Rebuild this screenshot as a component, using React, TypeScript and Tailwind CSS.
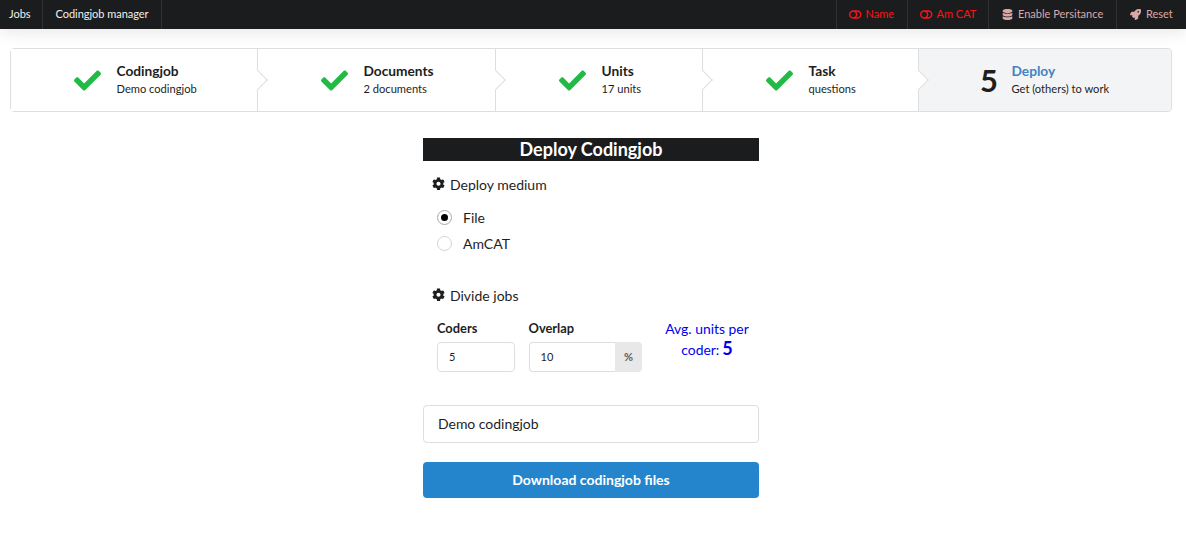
import { ReactNode } from "react";
import { FaCheck, FaCog, FaDatabase, FaRocket, FaToggleOff } from "react-icons/fa";

function MenuButton({ icon, label, className }: { icon: ReactNode; label: string; className: string }) {
  return (
    <button className={`flex items-center border-l border-[#313233] ${className}`}>
      {icon}
      <span className="pb-[2px]">{label}</span>
    </button>
  );
}

type StepProps = { title: string; text: string; className: string; active?: boolean; last?: boolean };

function Step({ title, text, className, active, last }: StepProps) {
  return (
    <div
      className={`relative flex items-center ${active ? "bg-[#f3f4f5]" : "bg-white"} ${
        last ? "rounded-r-[3px]" : "border-r border-[#dedede]"
      } ${className}`}
    >
      {active ? (
        <span className="mr-[15.5px] w-4 pt-[2px] text-[30.9px] leading-none font-bold">5</span>
      ) : (
        <FaCheck className="mr-[15.5px] h-[27px] w-[27px] shrink-0 text-[#21ba45]" />
      )}
      <div className="pb-[3px]">
        <div className={`text-[13.71px] leading-[18px] font-bold ${active ? "text-[#4183c4]" : ""}`}>{title}</div>
        <div className="mt-px text-[11.14px] leading-[15px]">{text}</div>
      </div>
      {!last && (
        <span className="absolute top-1/2 right-[-0.5px] z-10 h-[13.7px] w-[13.7px] translate-x-1/2 -translate-y-1/2 -rotate-45 border-r border-b border-[#dedede] bg-white" />
      )}
    </div>
  );
}

function SectionTitle({ children }: { children: ReactNode }) {
  return (
    <h3 className="ml-[9px] flex h-5 items-center text-[14px] leading-5">
      <FaCog className="mr-[5px] mb-[3px] h-[13.5px] w-[13px]" />
      {children}
    </h3>
  );
}

function RadioRow({ label, checked }: { label: string; checked?: boolean }) {
  return (
    <div className="flex h-[26px] items-center">
      <span
        className={`mb-px flex h-[15px] w-[15px] items-center justify-center rounded-full border bg-white ${
          checked ? "border-[#a9aaaa]" : "border-[#d4d4d5]"
        }`}
      >
        {checked && <span className="h-[7px] w-[7px] rounded-full bg-black" />}
      </span>
      <span className="ml-[11px]">{label}</span>
    </div>
  );
}

export default function App() {
  return (
    <div className="h-[533px] overflow-hidden bg-white font-[Lato,sans-serif] text-[14px] leading-5 text-[#1e1e1e]">
      <nav className="flex h-[29px] justify-between bg-[#1b1c1d] text-[11px] leading-[11px] text-[#f0f0f0] shadow-[0_4px_16px_rgba(0,0,0,0.09)]">
        <div className="flex">
          <a className="flex w-[43px] items-center border-r border-[#313233] pb-[2px] pl-[9px]">Jobs</a>
          <a className="flex w-[119px] items-center border-r border-[#313233] pb-[2px] pl-[12.5px] tracking-[-0.03px]">
            Codingjob manager
          </a>
        </div>
        <div className="flex">
          <MenuButton
            className="w-[71px] pl-[12px] text-[#ff1216]"
            icon={<FaToggleOff className="mr-[4px] mb-px h-[13px] w-[12.5px]" />}
            label="Name"
          />
          <MenuButton
            className="w-[81px] pl-[12px] text-[#ff1216]"
            icon={<FaToggleOff className="mr-[4px] mb-px h-[13px] w-[12.5px]" />}
            label="Am CAT"
          />
          <MenuButton
            className="w-[128px] pl-[13px] text-[#dba8a8]"
            icon={<FaDatabase className="mr-[5px] mb-px h-[11px] w-[11px]" />}
            label="Enable Persitance"
          />
          <MenuButton
            className="w-[70px] pl-[13px] text-[#dba8a8]"
            icon={<FaRocket className="mr-[5px] mb-px h-[11px] w-[11px]" />}
            label="Reset"
          />
        </div>
      </nav>

      <div className="mt-[19px] ml-[10px] flex h-[64px] w-[1162px] rounded-[4px] border border-[#dedede]">
        <Step title="Codingjob" text="Demo codingjob" className="w-[247px] pl-[63px]" />
        <Step title="Documents" text="2 documents" className="w-[238px] pl-[63px]" />
        <Step title="Units" text="17 units" className="w-[207px] pl-[63px]" />
        <Step title="Task" text="questions" className="w-[216px] pl-[63px]" />
        <Step title="Deploy" text="Get (others) to work" className="w-[252px] pl-[61px]" active last />
      </div>

      <main className="mx-auto mt-[26px] mr-[427px] flex w-[336px] flex-col">
        <h2 className="h-[23px] bg-[#1b1c1d] text-center text-[18px] leading-[23px] font-bold text-white">
          Deploy Codingjob
        </h2>
        <div className="mt-[14px]">
          <SectionTitle>Deploy medium</SectionTitle>
        </div>
        <div className="mt-[10px] ml-[14px]">
          <RadioRow label="File" checked />
          <RadioRow label="AmCAT" />
        </div>
        <div className="mt-[29px]">
          <SectionTitle>Divide jobs</SectionTitle>
        </div>
        <div className="mt-[14px] ml-[14px] flex h-[52px]">
          <label className="w-[78px] text-[12.86px] leading-[17px] font-bold">
            Coders
            <div className="mt-[5px] flex h-[30px] items-center rounded-[4px] border border-[#dedede] pb-px pl-[11px] text-[11px] font-normal">
              5
            </div>
          </label>
          <label className="ml-[13.5px] w-[113.5px] text-[12.86px] leading-[17px] font-bold">
            Overlap
            <div className="mt-[5px] flex h-[30px] text-[11px] font-normal">
              <span className="flex flex-1 items-center rounded-l-[4px] border border-r-0 border-[#dedede] pb-px pl-[11px]">
                10
              </span>
              <span className="flex w-[27px] items-center justify-center rounded-r-[4px] bg-[#e8e8e8] pb-[2px] font-bold text-[#5e5e5e]">
                %
              </span>
            </div>
          </label>
          <div className="-mt-px ml-[18px] flex w-[94px] flex-col text-center text-[13.9px] text-[#0000f0]">
            <span className="h-[19px] leading-5">Avg. units per</span>
            <span className="flex h-5 items-baseline justify-center gap-[3px] leading-5">
              coder: <b className="text-[18px] leading-5">5</b>
            </span>
          </div>
        </div>
        <div className="mt-[33px] flex h-[38px] items-center rounded-[4px] border border-[#dedede] pl-[14px] tracking-[-0.03px]">
          Demo codingjob
        </div>
        <button className="mt-[19px] h-[36px] rounded-[4px] bg-[#2585cc] text-[14px] font-bold text-white">
          Download codingjob files
        </button>
      </main>
    </div>
  );
}
